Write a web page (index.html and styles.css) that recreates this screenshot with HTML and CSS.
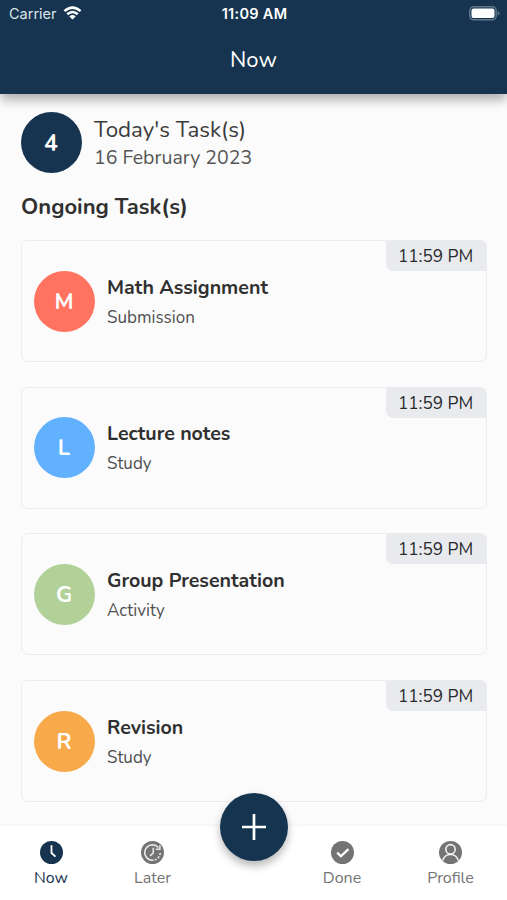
FILE: index.html
```html
<!DOCTYPE html>
<html lang="en">
<head>
<meta charset="utf-8">
<meta name="viewport" content="width=device-width, initial-scale=1">
<title>Now</title>
<link rel="stylesheet" href="styles.css">
</head>
<body>
<div class="app">
  <header class="header">
    <div class="status">
      <div class="carrier"><span>Carrier</span>
        <svg class="wifi" width="19" height="14.500" viewBox="0 0 20 15" fill="none" stroke="#fff" stroke-width="2.700"><path d="M1.500 5.300Q10-2.300 18.500 5.300M4.500 8.600Q10 3.700 15.500 8.600"/><path d="M10 14.200 6.700 10.900Q10 8 13.300 10.900Z" fill="#fff" stroke="none"/></svg>
      </div>
      <span class="clock">11:09 AM</span>
      <svg class="battery" width="31" height="15" viewBox="0 0 31 15"><rect x=".8" y=".8" width="26.400" height="13" rx="4" fill="none" stroke="#5f768c" stroke-width="1.500"/><rect x="2.500" y="2.500" width="23" height="9.600" rx="2" fill="#fff"/><path d="M28.700 5q1.800.6 1.800 2.300t-1.800 2.300z" fill="#5f768c"/></svg>
    </div>
    <h1 class="title">Now</h1>
  </header>
  <main class="content">
    <section class="summary">
      <div class="circle count">4</div>
      <div>
        <div class="today">Today's Task(s)</div>
        <div class="date">16 February 2023</div>
      </div>
    </section>
    <h2 class="heading">Ongoing Task(s)</h2>
    <div class="list">
      <article class="card"><div class="circle red">M</div><div class="info"><h3 class="name">Math Assignment</h3><p class="kind">Submission</p></div><time class="time">11:59 PM</time></article>
      <article class="card"><div class="circle blue">L</div><div class="info"><h3 class="name">Lecture notes</h3><p class="kind">Study</p></div><time class="time">11:59 PM</time></article>
      <article class="card"><div class="circle green">G</div><div class="info"><h3 class="name">Group Presentation</h3><p class="kind">Activity</p></div><time class="time">11:59 PM</time></article>
      <article class="card"><div class="circle orange">R</div><div class="info"><h3 class="name">Revision</h3><p class="kind">Study</p></div><time class="time">11:59 PM</time></article>
    </div>
  </main>
  <nav class="nav">
    <a class="tab active"><svg class="icon" viewBox="0 0 24 24"><circle cx="12" cy="12" r="12" fill="currentColor"/><path d="M12 4.500v8l4.200 3.800" fill="none" stroke="#fff" stroke-width="1.900"/></svg><span>Now</span></a>
    <a class="tab"><svg class="icon" viewBox="0 0 24 24"><circle cx="12" cy="12" r="12" fill="currentColor"/><g fill="none" stroke="#fff" stroke-opacity=".85" stroke-width="1.600"><path d="M18 6.800A8 8 0 1 0 13 20"/><path d="M20 12.500A8 8 0 0 1 13 20" stroke-dasharray="2.200 1.500"/><path d="M12.800 7v5.500L9.500 15.500M15.500 8.500h4.200V4.500"/></g></svg><span>Later</span></a>
    <button class="fab" aria-label="Add task"><svg width="26" height="26" viewBox="0 0 26 26" stroke="#fff" stroke-width="2.700"><path d="M13 0v26M1 13h24"/></svg></button>
    <a class="tab"><svg class="icon" viewBox="0 0 24 24"><circle cx="12" cy="12" r="12" fill="currentColor"/><path d="m6.500 12.200 3.800 3.700 7.900-7.500" fill="none" stroke="#fff" stroke-width="2.400"/></svg><span>Done</span></a>
    <a class="tab profile"><svg class="icon" viewBox="0 0 24 24"><circle cx="12" cy="12" r="12" fill="currentColor"/><g fill="none" stroke="#fff" stroke-opacity=".9" stroke-width="1.700"><circle cx="12" cy="8.700" r="4.900"/><path d="M3.800 20.300c1.300-4 4-6.200 8.200-6.200s6.900 2.200 8.200 6.200"/></g></svg><span>Profile</span></a>
  </nav>
</div>
</body>
</html>
```
FILE: styles.css
```css
* { box-sizing: border-box; }
body { margin: 0; background: #fbfbfb; color: #3b3b3b; font-family: Nunito, Lato, sans-serif; }
h1, h2, h3, p { margin: 0; font-weight: 400; }
.app { height: 900px; display: flex; flex-direction: column; overflow: hidden; }
.header { flex: none; height: 94px; background: #16344f; color: #fff; box-shadow: 0 7px 10px -1px rgba(0, 0, 0, .3); z-index: 1; }
.status { height: 28px; padding: 0 7px 0 9px; display: grid; grid-template-columns: 1fr auto 1fr; align-items: center; font-family: Inter, sans-serif; font-size: 14.500px; }
.carrier { display: flex; align-items: center; gap: 6px; margin-top: -1px; color: #dce4eb; }
.wifi { margin-top: -1px; }
.clock { margin-top: -1px; font-weight: 600; letter-spacing: .3px; }
.battery { justify-self: end; margin-top: -1px; }
.title { margin-top: 17px; text-align: center; font-size: 22px; line-height: 30px; }
.content { flex: 1; min-height: 0; padding: 18px 20px 0 21px; }
.summary { display: flex; gap: 12px; }
.circle { flex: none; width: 61px; height: 61px; border-radius: 50%; display: flex; align-items: center; justify-content: center; color: #fff; font-size: 22px; font-weight: 700; }
.card .circle { padding: 1px 1px 0 0; }
.count { background: #16344f; font-size: 23px; padding: 1px 1px 0 0; }
.today { padding-top: 3px; font-size: 22.300px; line-height: 29px; }
.date { font-size: 19.500px; line-height: 28px; color: #555; }
.heading { margin-top: 18px; font-size: 22px; line-height: 32px; font-weight: 700; color: #303030; }
.list { margin-top: 17px; display: flex; flex-direction: column; gap: 24.700px; }
.card { position: relative; flex: none; height: 122px; padding-left: 12px; border: 1px solid #ececee; border-radius: 7px; display: flex; align-items: center; gap: 12px; }
.red { background: #ff7360; }
.blue { background: #62b1ff; }
.green { background: #b1d199; }
.orange { background: #f8aa4b; }
.info { padding-top: 3px; }
.name { font-size: 19.600px; line-height: 30px; font-weight: 700; color: #303030; }
.kind { font-size: 17px; line-height: 30px; color: #505050; }
.time { position: absolute; top: -1px; right: -1px; width: 101px; height: 31px; padding-right: 2px; border-radius: 3px 7px 0 7px; background: #e9eaed; color: #292b2e; font-size: 17.200px; line-height: 33px; text-align: center; }
.nav { flex: none; height: 74px; display: grid; grid-template-columns: 102px 101px 102px 74px 1fr; background: #fff; box-shadow: 0 -1px 3px rgba(0, 0, 0, .04); z-index: 1; }
.tab { display: flex; flex-direction: column; align-items: center; padding-top: 15px; color: #747474; font-size: 16px; line-height: 24px; }
.profile { padding-left: 15px; }
.active { color: #16344f; }
.icon { display: block; width: 23px; height: 23px; margin-bottom: 2px; }
.fab { justify-self: center; margin: -33px 0 0; padding: 0; width: 68px; height: 68px; border: 0; border-radius: 50%; background: #14344f; box-shadow: 0 5px 9px rgba(0, 0, 0, .28); display: flex; align-items: center; justify-content: center; }
```
